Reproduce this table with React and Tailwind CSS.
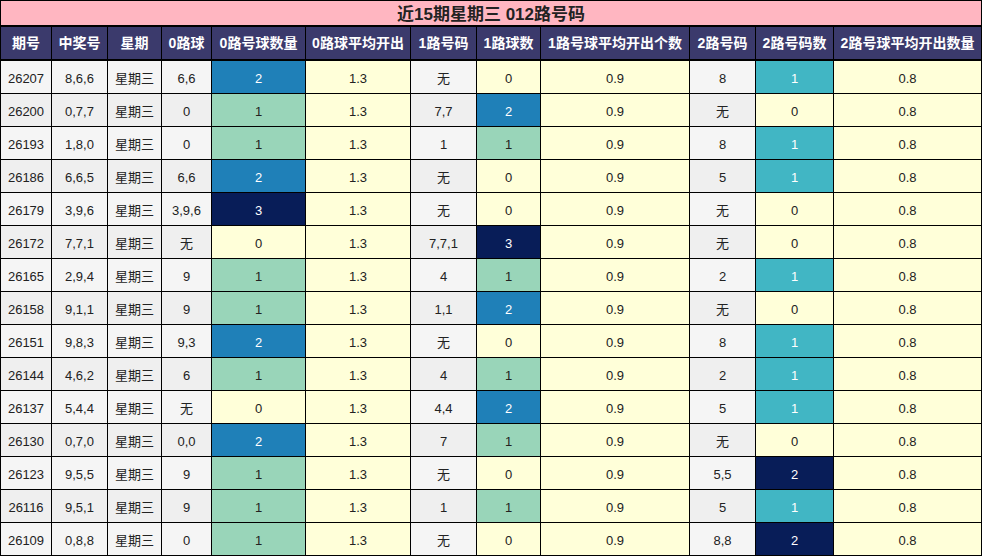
import React from "react";

const cols = "grid grid-cols-[51px_56px_54px_50px_94px_105px_66px_64px_149px_66px_78px_149px]";

const headers = ["期号", "中奖号", "星期", "0路球", "0路号球数量", "0路球平均开出", "1路号码", "1路球数", "1路号球平均开出个数", "2路号码", "2路号码数", "2路号球平均开出数量"];

const rows = [
  ["26207", "8,6,6", "6,6", 2, "无", 0, "8", 1],
  ["26200", "0,7,7", "0", 1, "7,7", 2, "无", 0],
  ["26193", "1,8,0", "0", 1, "1", 1, "8", 1],
  ["26186", "6,6,5", "6,6", 2, "无", 0, "5", 1],
  ["26179", "3,9,6", "3,9,6", 3, "无", 0, "无", 0],
  ["26172", "7,7,1", "无", 0, "7,7,1", 3, "无", 0],
  ["26165", "2,9,4", "9", 1, "4", 1, "2", 1],
  ["26158", "9,1,1", "9", 1, "1,1", 2, "无", 0],
  ["26151", "9,8,3", "9,3", 2, "无", 0, "8", 1],
  ["26144", "4,6,2", "6", 1, "4", 1, "2", 1],
  ["26137", "5,4,4", "无", 0, "4,4", 2, "5", 1],
  ["26130", "0,7,0", "0,0", 2, "7", 1, "无", 0],
  ["26123", "9,5,5", "9", 1, "无", 0, "5,5", 2],
  ["26116", "9,5,1", "9", 1, "1", 1, "5", 1],
  ["26109", "0,8,8", "0", 1, "无", 0, "8,8", 2],
];

// heat colours for the 0路 / 1路 count columns
const heat01 = {
  0: "bg-[#ffffd9] text-[#222]",
  1: "bg-[#99d5b9] text-[#222]",
  2: "bg-[#1f80b8] text-white",
  3: "bg-[#081d58] text-white",
};
// 2路 count column has its own range
const heat2 = {
  0: "bg-[#ffffd9] text-[#222]",
  1: "bg-[#41b6c4] text-white",
  2: "bg-[#081d58] text-white",
};

function Cell({ children, className = "", last }) {
  return (
    <div className={`flex items-center justify-center border-l border-black ${last ? "border-r" : ""} ${className}`}>
      {children}
    </div>
  );
}

export default function App() {
  return (
    <div className="w-[982px] h-[557px] bg-white text-[13px] text-[#222]" style={{ fontFamily: '"Liberation Sans", "Noto Sans CJK SC", sans-serif' }}>
      <div className="h-[27px] pt-[3px] border border-b-2 border-black bg-[#ffb6c1] flex items-center justify-center text-[17px] font-bold text-[#222]">
        近15期星期三 012路号码
      </div>
      <div className={`${cols} h-[34px] border-b-2 border-black bg-[#3b3a6c] text-white font-bold text-[14px]`}>
        {headers.map((h, i) => (
          <Cell key={h} last={i === headers.length - 1} className="whitespace-nowrap pt-[1px]">{h}</Cell>
        ))}
      </div>
      {rows.map((r, idx) => {
        const grey = idx % 2 === 0 ? "bg-[#f5f5f5]" : "bg-[#efefef]";
        return (
          <div key={r[0]} className={`${cols} h-[33px] border-b border-black [&>div]:pt-[4px]`}>
            <Cell className={grey}>{r[0]}</Cell>
            <Cell className={grey}>{r[1]}</Cell>
            <Cell className={grey}>星期三</Cell>
            <Cell className={grey}>{r[2]}</Cell>
            <Cell className={heat01[r[3]]}>{r[3]}</Cell>
            <Cell className="bg-[#ffffd9]">1.3</Cell>
            <Cell className={grey}>{r[4]}</Cell>
            <Cell className={heat01[r[5]]}>{r[5]}</Cell>
            <Cell className="bg-[#ffffd9]">0.9</Cell>
            <Cell className={grey}>{r[6]}</Cell>
            <Cell className={heat2[r[7]]}>{r[7]}</Cell>
            <Cell className="bg-[#ffffd9]" last>0.8</Cell>
          </div>
        );
      })}
    </div>
  );
}
